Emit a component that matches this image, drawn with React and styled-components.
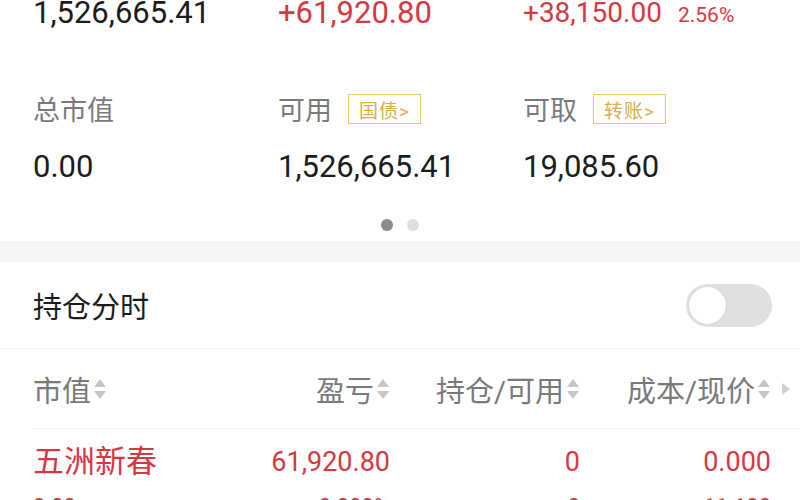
import React from "react";
import styled, { createGlobalStyle } from "styled-components";

const GlobalStyle = createGlobalStyle`
  html, body {
    margin: 0;
    padding: 0;
    background: #ffffff;
    width: 800px;
    height: 500px;
    overflow: hidden;
  }
  body {
    font-family: Roboto, "Noto Sans CJK SC", sans-serif;
  }
`;

const colors = {
  red: "#d5393f",
  text: "#1c1c1c",
  label: "#7a7a7a",
  gold: "#d8ae48",
  goldBorder: "#ecc96e",
  band: "#f5f5f5",
  line: "#efefef",
};

export const Page = styled.div`
  width: 800px;
  height: 500px;
  overflow: hidden;
  background: #fff;
`;

export const AssetPanel = styled.div`
  padding-left: 33px;
  padding-bottom: 10px;
`;

export const AssetGrid = styled.div`
  display: grid;
  grid-template-columns: 245px 245px 245px;
  margin-top: ${(p) => p.top}px;
`;

export const BigValue = styled.div`
  display: flex;
  align-items: baseline;
  gap: 16px;
  font-size: ${(p) => p.size || 31}px;
  line-height: 31px;
  height: 31px;
  color: ${(p) => (p.red ? colors.red : colors.text)};
  white-space: nowrap;
`;

export const Percent = styled.span`
  font-size: 21px;
`;

export const LabelCell = styled.div`
  display: flex;
  align-items: center;
  height: 30px;
  gap: 16px;
  font-size: 27px;
  color: ${colors.label};
  white-space: nowrap;
`;

export const Badge = styled.span`
  display: inline-flex;
  align-items: center;
  height: 28px;
  padding: 0 10px;
  margin-top: 2px;
  border: 1.5px solid ${colors.goldBorder};
  color: ${colors.gold};
  font-size: 19px;
  letter-spacing: 1px;
`;

export const Dots = styled.div`
  display: flex;
  justify-content: center;
  gap: 14px;
  margin-top: 37px;
  padding-right: 33px;
`;

export const Dot = styled.span`
  width: 12px;
  height: 12px;
  border-radius: 50%;
  background: ${(p) => (p.active ? "#8a8a8a" : "#dedede")};
`;

export const Band = styled.div`
  height: 21px;
  background: ${colors.band};
`;

export const SwitchRow = styled.div`
  display: flex;
  align-items: center;
  justify-content: space-between;
  height: 86px;
  padding: 0 28px 0 33px;
  border-bottom: 1px solid ${colors.line};
  font-size: 29px;
  color: ${colors.text};
`;

export const Toggle = styled.div`
  width: 86px;
  height: 43px;
  border-radius: 22px;
  background: #e0e0e0;
  display: flex;
  align-items: center;
  padding-left: 3px;
  box-sizing: border-box;
`;

export const Knob = styled.span`
  width: 37px;
  height: 37px;
  border-radius: 50%;
  background: #fff;
  box-shadow: 0 0 2px rgba(0, 0, 0, 0.12);
`;

const cols = "167px 190px 190px 191px 22px";

export const HeaderRow = styled.div`
  display: grid;
  grid-template-columns: ${cols};
  align-items: center;
  height: 79px;
  margin-left: 33px;
  border-bottom: 1px solid ${colors.line};
  font-size: 29px;
  color: ${colors.label};
`;

export const HeadCell = styled.div`
  display: flex;
  align-items: center;
  justify-content: ${(p) => (p.left ? "flex-start" : "flex-end")};
  white-space: nowrap;
`;

export const Arrow = styled.div`
  display: flex;
  justify-content: flex-end;
  padding-right: 2px;
`;

export const DataRow = styled.div`
  display: grid;
  grid-template-columns: ${cols};
  padding: 15px 0 0 33px;
  color: ${colors.red};
`;

export const DataCell = styled.div`
  display: flex;
  flex-direction: column;
  align-items: ${(p) => (p.left ? "flex-start" : "flex-end")};
  white-space: nowrap;
`;

export const MainText = styled.div`
  font-size: ${(p) => (p.name ? 31 : 27)}px;
  line-height: 36px;
`;

export const SubText = styled.div`
  font-size: 22px;
  line-height: 30px;
  margin-top: 12px;
`;

const SortIcon = () => (
  <svg width="14" height="24" viewBox="0 0 14 24" style={{ marginLeft: 2 }}>
    <path d="M7 2 L13 10 L1 10 Z" fill="#c6c6c6" />
    <path d="M7 22 L13 14 L1 14 Z" fill="#c6c6c6" />
  </svg>
);

const RightTri = () => (
  <svg width="10" height="14" viewBox="0 0 10 14">
    <path d="M1 1 L9 7 L1 13 Z" fill="#cfcfcf" />
  </svg>
);

const topValues = [
  { v: "1,526,665.41" },
  { v: "+61,920.80", red: true },
  { v: "+38,150.00", red: true, pct: "2.56%", size: 28 },
];

const labels = [
  { t: "总市值" },
  { t: "可用", badge: "国债>" },
  { t: "可取", badge: "转账>" },
];

const values = ["0.00", "1,526,665.41", "19,085.60"];

const headers = ["市值", "盈亏", "持仓/可用", "成本/现价"];

const holding = {
  main: ["五洲新春", "61,920.80", "0", "0.000"],
  sub: ["0.00", "0.000%", "0", "11.180"],
};

export default function App() {
  return (
    <Page>
      <GlobalStyle />
      <AssetPanel>
        <AssetGrid top={-3}>
          {topValues.map((x) => (
            <BigValue key={x.v} red={x.red} size={x.size}>
              {x.v}
              {x.pct && <Percent>{x.pct}</Percent>}
            </BigValue>
          ))}
        </AssetGrid>
        <AssetGrid top={65}>
          {labels.map((l) => (
            <LabelCell key={l.t}>
              {l.t}
              {l.badge && <Badge>{l.badge}</Badge>}
            </LabelCell>
          ))}
        </AssetGrid>
        <AssetGrid top={28}>
          {values.map((v) => (
            <BigValue key={v}>{v}</BigValue>
          ))}
        </AssetGrid>
        <Dots>
          <Dot active />
          <Dot />
        </Dots>
      </AssetPanel>
      <Band />
      <SwitchRow>
        持仓分时
        <Toggle>
          <Knob />
        </Toggle>
      </SwitchRow>
      <HeaderRow>
        {headers.map((h, i) => (
          <HeadCell key={h} left={i === 0}>
            {h}
            <SortIcon />
          </HeadCell>
        ))}
        <Arrow>
          <RightTri />
        </Arrow>
      </HeaderRow>
      <DataRow>
        {holding.main.map((m, i) => (
          <DataCell key={i} left={i === 0}>
            <MainText name={i === 0}>{m}</MainText>
            <SubText>{holding.sub[i]}</SubText>
          </DataCell>
        ))}
      </DataRow>
    </Page>
  );
}
